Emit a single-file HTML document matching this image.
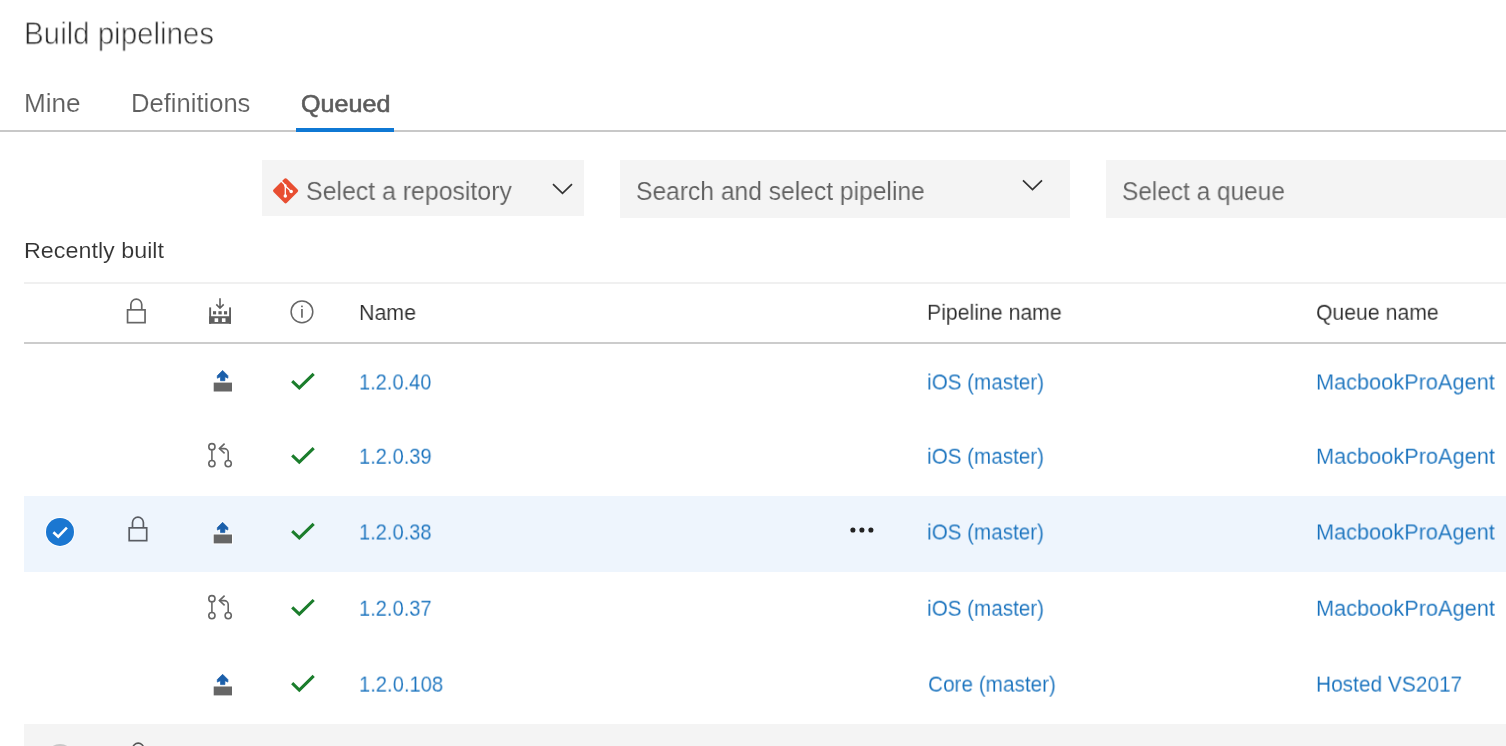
<!DOCTYPE html>
<html lang="en">
<head>
<meta charset="utf-8">
<title>Build pipelines</title>
<style>
html,body{margin:0;padding:0;background:#fff;}
body{width:1506px;height:746px;overflow:hidden;position:relative;font-family:"Liberation Sans",sans-serif;}
h1,h2{margin:0;font-weight:400;font-size:inherit;}
a{text-decoration:none;cursor:pointer;}
.abs{position:absolute;}
.tx{will-change:transform;position:absolute;white-space:nowrap;line-height:1;transform-origin:0 0;display:block;}
.tabline{position:absolute;width:1506px;height:2px;background:#c8c8c8;}
.tabsel{position:absolute;width:98px;height:4px;background:#0f78d4;}
.combo{position:absolute;background:#f4f4f4;}
.grid-top{position:absolute;width:1482px;height:2px;background:#f0f0f0;}
.grid-head-line{position:absolute;width:1482px;height:2px;background:#cccccc;}
.row{position:absolute;}
.row.sel{background:#eef5fd;}
.row.hov{background:#f4f4f4;overflow:hidden;}
svg.ico{position:absolute;overflow:visible;}
</style>
</head>
<body>
<h1 class="hub-title abs" style="left:0px;top:0px;width:1506px;height:70px;"><span class="tx" style="left:24.35px;top:17px;font-size:32px;color:#222;transform:translateY(0.3px) scaleX(0.9214);-webkit-text-stroke:0.8px #fff;">Build pipelines</span></h1>
<nav class="tabs abs" style="left:0px;top:80px;width:1506px;height:52px;"><a class="tx" style="left:23.72px;top:11px;font-size:25px;color:#606060;transform:scaleX(1.0453);-webkit-text-stroke:0.12px #fff;">Mine</a><a class="tx" style="left:130.6px;top:10px;font-size:25px;color:#606060;transform:translateY(0.9px) scaleX(1.0229);-webkit-text-stroke:0.12px #fff;">Definitions</a><a class="tx" style="left:300.87px;top:11px;font-size:24px;color:#5c5c5c;transform:translateY(0.5px) scaleX(1.0467);-webkit-text-stroke:0.6px #5c5c5c;">Queued</a><div class="tabline" style="left:0px;top:50px"></div><div class="tabsel" style="left:296px;top:48px"></div></nav>
<section class="filters abs" style="left:0px;top:150px;width:1506px;height:76px;"><div class="combo" style="left:262px;top:10px;width:322px;height:56px;"><svg class="ico git" style="left:8px;top:16px" width="32" height="30" viewBox="270 176 32 30"><rect x="276.20" y="181.40" width="18.8" height="18.8" rx="1.8" fill="#e84e31" transform="rotate(45 285.6 190.8)"/><g stroke="#fff" stroke-width="1.3" fill="none"><path d="M281.2 181.0L285.3 185.2V195.9"/><path d="M285.3 186L291.2 191.4"/></g><circle cx="285.3" cy="195.9" r="1.75" fill="#fff"/><circle cx="291.2" cy="191.4" r="1.75" fill="#fff"/><circle cx="285.3" cy="185.6" r="1.3" fill="#fff"/></svg><span class="tx" style="left:44.38px;top:18px;font-size:25px;color:#606060;transform:translateY(0.9px) scaleX(0.9945);-webkit-text-stroke:0.12px #f4f4f4;">Select a repository</span><svg class="ico chev" style="left:286px;top:20px" width="28" height="20" viewBox="548 180 28 20"><path d="M553.00 184.20L562.50 193.40L572.00 184.20" fill="none" stroke="#333" stroke-width="1.7"/></svg></div><div class="combo" style="left:620px;top:10px;width:450px;height:58px;"><span class="tx" style="left:15.84px;top:19px;font-size:25px;color:#606060;transform:scaleX(0.9846);-webkit-text-stroke:0.12px #f4f4f4;">Search and select pipeline</span><svg class="ico chev" style="left:398px;top:16px" width="28" height="20" viewBox="1018 176 28 20"><path d="M1023.00 180.30L1032.50 189.50L1042.00 180.30" fill="none" stroke="#333" stroke-width="1.7"/></svg></div><div class="combo" style="left:1106px;top:10px;width:400px;height:58px;"><span class="tx" style="left:15.52px;top:19px;font-size:25px;color:#606060;transform:translateY(0.1px) scaleX(0.9763);-webkit-text-stroke:0.12px #f4f4f4;">Select a queue</span></div></section>
<h2 class="section-title abs" style="left:24px;top:234px;width:400px;height:36px;"><span class="tx" style="left:-0.38px;top:5px;font-size:22.5px;color:#333;transform:translateY(0.9px) scaleX(1.0365);-webkit-text-stroke:0.12px #fff;">Recently built</span></h2>
<section class="grid abs" style="left:0px;top:282px;width:1506px;height:464px;"><div class="grid-top" style="left:24px;top:0px"></div><div class="grid-header abs" style="left:24px;top:2px;width:1482px;height:58px;"><svg class="ico lock" style="left:96px;top:10px" width="34" height="34" viewBox="120 294 34 34"><rect x="127.55" y="309.85" width="17.50" height="12.80" fill="none" stroke="#666" stroke-width="1.7"/><path d="M130.85 309.85V304.60a5.45 5.45 0 0 1 10.90 0V309.85" fill="none" stroke="#666" stroke-width="1.7"/></svg><svg class="ico build" style="left:180px;top:10px" width="34" height="34" viewBox="204 294 34 34"><rect x="209.2" y="307.4" width="1.9" height="16.4" fill="#5f5f5f"/><rect x="229.1" y="307.4" width="1.9" height="16.4" fill="#5f5f5f"/><path fill-rule="evenodd" fill="#5f5f5f" d="M209.2 316.3H231V323.8H209.2Z M214.6 318.2H218.2V321.9H214.6Z M221.9 318.2H225.5V321.9H221.9Z"/><rect x="213.0" y="311.2" width="3.10" height="3.2" fill="#5f5f5f"/><rect x="218.4" y="311.2" width="3.30" height="3.2" fill="#5f5f5f"/><rect x="224.0" y="311.2" width="3.10" height="3.2" fill="#5f5f5f"/><path d="M220 298.3V308 M216.3 304.4L220 308.2L223.7 304.4" fill="none" stroke="#5f5f5f" stroke-width="1.6"/></svg><svg class="ico info" style="left:262px;top:12px" width="34" height="34" viewBox="286 296 34 34"><circle cx="301.95" cy="311.8" r="10.85" fill="none" stroke="#666" stroke-width="1.5"/><rect x="301.1" y="305.6" width="1.7" height="1.6" fill="#666"/><rect x="301.1" y="309" width="1.7" height="8.7" fill="#666"/></svg><span class="tx" style="left:334.73px;top:18px;font-size:22px;color:#2b2b2b;transform:scaleX(0.9719);-webkit-text-stroke:0.12px #fff;">Name</span><span class="tx" style="left:903.49px;top:17px;font-size:22px;color:#2b2b2b;transform:translateY(0.8px) scaleX(0.9657);-webkit-text-stroke:0.12px #fff;">Pipeline name</span><span class="tx" style="left:1291.97px;top:17px;font-size:22px;color:#2b2b2b;transform:translateY(0.8px) scaleX(0.9638);-webkit-text-stroke:0.12px #fff;">Queue name</span></div><div class="grid-head-line" style="left:24px;top:60px"></div><div class="row" style="left:24px;top:62px;width:1482px;height:76px;"><svg class="ico manual" style="left:182px;top:20px" width="34" height="34" viewBox="206 364 34 34"><rect x="213.7" y="382.60" width="18.3" height="8.9" fill="#666"/><path fill="#1b5faa" stroke="#1b5faa" stroke-width="0.7" stroke-linejoin="round" d="M222.6 370.40 L227.9 375.70 V378.20 L224.9 376.80 V380.70 H220.5 V376.80 L217.3 378.20 V375.70 Z"/></svg><svg class="ico ok" style="left:262px;top:22px" width="34" height="30" viewBox="286 366 34 30"><path d="M292.2 381.10L299.3 387.90L313.7 373.80" fill="none" stroke="#1b7d2c" stroke-width="3.1"/></svg><a class="tx lnk" style="left:335.12px;top:27px;font-size:22px;color:#1771bd;transform:translateY(0.5px) scaleX(0.9108);-webkit-text-stroke:0.12px #fff;">1.2.0.40</a><a class="tx lnk" style="left:903.2px;top:27px;font-size:22px;color:#1771bd;transform:translateY(0.5px) scaleX(0.9391);-webkit-text-stroke:0.12px #fff;">iOS (master)</a><a class="tx lnk" style="left:1291.74px;top:27px;font-size:22px;color:#1771bd;transform:translateY(0.5px) scaleX(0.9871);-webkit-text-stroke:0.12px #fff;">MacbookProAgent</a></div><div class="row" style="left:24px;top:138px;width:1482px;height:76px;"><svg class="ico pr" style="left:180px;top:18px" width="34" height="34" viewBox="204 438 34 34"><g fill="none" stroke="#666" stroke-width="1.6"><circle cx="211.9" cy="446.70" r="3.1"/><circle cx="211.9" cy="463.60" r="3.1"/><circle cx="228.2" cy="463.60" r="3.1"/><path d="M211.9 449.80V460.50"/><path d="M228.2 460.50V452.60a4 4 0 0 0 -4 -4H219.3"/><path d="M224.6 443.60L219.4 448.60L224.6 453.40"/></g></svg><svg class="ico ok" style="left:262px;top:20px" width="34" height="30" viewBox="286 440 34 30"><path d="M292.2 455.35L299.3 462.15L313.7 448.05" fill="none" stroke="#1b7d2c" stroke-width="3.1"/></svg><a class="tx lnk" style="left:335.05px;top:25px;font-size:22px;color:#1771bd;transform:translateY(0.75px) scaleX(0.9135);-webkit-text-stroke:0.12px #fff;">1.2.0.39</a><a class="tx lnk" style="left:903.2px;top:25px;font-size:22px;color:#1771bd;transform:translateY(0.75px) scaleX(0.9389);-webkit-text-stroke:0.12px #fff;">iOS (master)</a><a class="tx lnk" style="left:1291.8px;top:25px;font-size:22px;color:#1771bd;transform:translateY(0.75px) scaleX(0.9879);-webkit-text-stroke:0.12px #fff;">MacbookProAgent</a></div><div class="row sel" style="left:24px;top:214px;width:1482px;height:76px;"><svg class="ico sel" style="left:20px;top:20px" width="32" height="32" viewBox="44 516 32 32"><circle cx="60" cy="531.9" r="14.9" fill="#fff"/><circle cx="60" cy="531.9" r="14" fill="#1b77d1"/><path d="M53.4 532.3L58.2 536.6L66.9 527.7" fill="none" stroke="#fff" stroke-width="2.6"/></svg><svg class="ico lock" style="left:97px;top:16px" width="34" height="34" viewBox="121 512 34 34"><rect x="129.20" y="527.85" width="17.50" height="12.80" fill="none" stroke="#595c62" stroke-width="1.7"/><path d="M132.50 527.85V522.60a5.45 5.45 0 0 1 10.90 0V527.85" fill="none" stroke="#595c62" stroke-width="1.7"/></svg><svg class="ico manual" style="left:182px;top:19px" width="34" height="34" viewBox="206 515 34 34"><rect x="212.7" y="533.50" width="20.3" height="10.9" fill="#fff" opacity="0.85"/><path fill="#fff" opacity="0.85" d="M222.6 520.50 L229.4 527.30 V531.90 L226 530.50 V533.90 H219.4 V530.50 L215.8 531.90 V527.30 Z"/><rect x="213.7" y="534.50" width="18.3" height="8.9" fill="#666"/><path fill="#1b5faa" stroke="#1b5faa" stroke-width="0.7" stroke-linejoin="round" d="M222.6 522.30 L227.9 527.60 V530.10 L224.9 528.70 V532.60 H220.5 V528.70 L217.3 530.10 V527.60 Z"/></svg><svg class="ico ok" style="left:262px;top:20px" width="34" height="30" viewBox="286 516 34 30"><path d="M292.2 531.10L299.3 537.90L313.7 523.80" fill="none" stroke="#1b7d2c" stroke-width="3.1"/></svg><a class="tx lnk" style="left:335.21px;top:25px;font-size:22px;color:#1771bd;transform:translateY(0.5px) scaleX(0.9123);-webkit-text-stroke:0.12px #eef5fd;">1.2.0.38</a><svg class="ico more" style="left:824px;top:28px" width="28" height="12" viewBox="848 524 28 12"><circle cx="852.9" cy="530" r="2.55" fill="#222"/><circle cx="861.9" cy="530" r="2.55" fill="#222"/><circle cx="870.9" cy="530" r="2.55" fill="#222"/></svg><a class="tx lnk" style="left:903.29px;top:25px;font-size:22px;color:#1771bd;transform:translateY(0.5px) scaleX(0.9381);-webkit-text-stroke:0.12px #eef5fd;">iOS (master)</a><a class="tx lnk" style="left:1291.74px;top:25px;font-size:22px;color:#1771bd;transform:translateY(0.5px) scaleX(0.9871);-webkit-text-stroke:0.12px #eef5fd;">MacbookProAgent</a></div><div class="row" style="left:24px;top:290px;width:1482px;height:76px;"><svg class="ico pr" style="left:180px;top:18px" width="34" height="34" viewBox="204 590 34 34"><g fill="none" stroke="#666" stroke-width="1.6"><circle cx="211.9" cy="598.70" r="3.1"/><circle cx="211.9" cy="615.60" r="3.1"/><circle cx="228.2" cy="615.60" r="3.1"/><path d="M211.9 601.80V612.50"/><path d="M228.2 612.50V604.60a4 4 0 0 0 -4 -4H219.3"/><path d="M224.6 595.60L219.4 600.60L224.6 605.40"/></g></svg><svg class="ico ok" style="left:262px;top:20px" width="34" height="30" viewBox="286 592 34 30"><path d="M292.2 607.30L299.3 614.10L313.7 600.00" fill="none" stroke="#1b7d2c" stroke-width="3.1"/></svg><a class="tx lnk" style="left:335.17px;top:25px;font-size:22px;color:#1771bd;transform:translateY(0.7px) scaleX(0.9133);-webkit-text-stroke:0.12px #fff;">1.2.0.37</a><a class="tx lnk" style="left:903.2px;top:25px;font-size:22px;color:#1771bd;transform:translateY(0.7px) scaleX(0.9389);-webkit-text-stroke:0.12px #fff;">iOS (master)</a><a class="tx lnk" style="left:1291.8px;top:25px;font-size:22px;color:#1771bd;transform:translateY(0.7px) scaleX(0.9879);-webkit-text-stroke:0.12px #fff;">MacbookProAgent</a></div><div class="row" style="left:24px;top:366px;width:1482px;height:76px;"><svg class="ico manual" style="left:182px;top:19px" width="34" height="34" viewBox="206 667 34 34"><rect x="213.7" y="686.50" width="18.3" height="8.9" fill="#666"/><path fill="#1b5faa" stroke="#1b5faa" stroke-width="0.7" stroke-linejoin="round" d="M222.6 674.30 L227.9 679.60 V682.10 L224.9 680.70 V684.60 H220.5 V680.70 L217.3 682.10 V679.60 Z"/></svg><svg class="ico ok" style="left:262px;top:20px" width="34" height="30" viewBox="286 668 34 30"><path d="M292.2 683.20L299.3 690.00L313.7 675.90" fill="none" stroke="#1b7d2c" stroke-width="3.1"/></svg><a class="tx lnk" style="left:335.24px;top:25px;font-size:22px;color:#1771bd;transform:translateY(0.6px) scaleX(0.9172);-webkit-text-stroke:0.12px #fff;">1.2.0.108</a><a class="tx lnk" style="left:903.78px;top:25px;font-size:22px;color:#1771bd;transform:translateY(0.6px) scaleX(0.9430);-webkit-text-stroke:0.12px #fff;">Core (master)</a><a class="tx lnk" style="left:1291.94px;top:25px;font-size:22px;color:#1771bd;transform:translateY(0.6px) scaleX(0.9484);-webkit-text-stroke:0.12px #fff;">Hosted VS2017</a></div><div class="row hov" style="left:24px;top:442px;width:1482px;height:22px;"><svg class="ico chk" style="left:20px;top:18px" width="32" height="4" viewBox="44 742 32 4"><circle cx="60" cy="758" r="14" fill="#c8c8c8"/></svg><svg class="ico lock" style="left:97px;top:14px" width="34" height="34" viewBox="121 738 34 34"><rect x="129.45" y="753.85" width="17.50" height="12.80" fill="none" stroke="#555" stroke-width="1.7"/><path d="M132.75 753.85V748.60a5.45 5.45 0 0 1 10.90 0V753.85" fill="none" stroke="#555" stroke-width="1.7"/></svg></div></section>
</body>
</html>
